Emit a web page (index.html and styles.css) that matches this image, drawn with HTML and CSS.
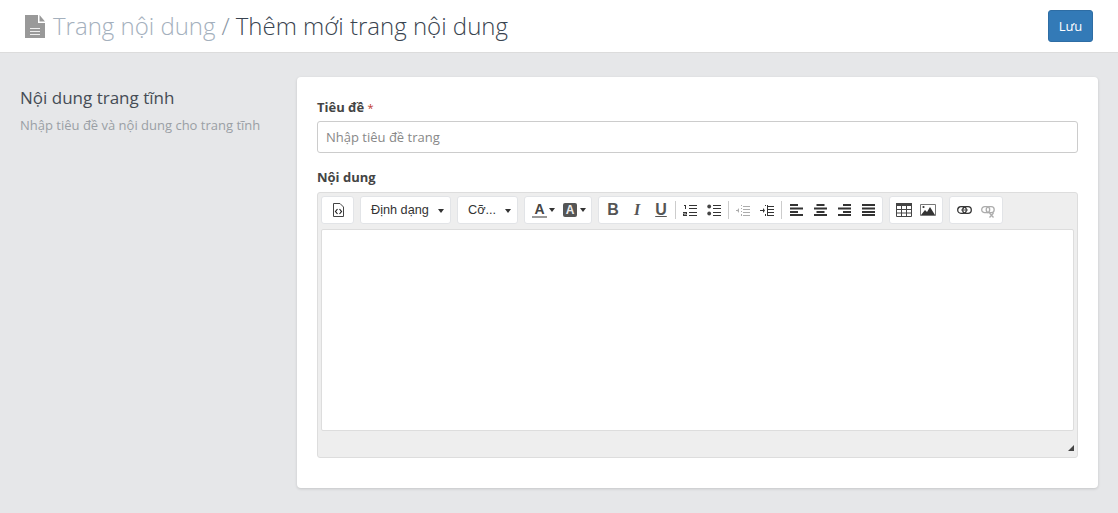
FILE: index.html
```html
<!DOCTYPE html>
<html lang="vi">
<head>
    <meta charset="UTF-8">
    <title>Thêm mới trang nội dung</title>
    <link rel="stylesheet" href="styles.css">
</head>
<body>
    <header class="page-header">
        <h1 class="page-title">
            <svg class="title-icon" width="20" height="23" viewBox="0 0 20 23">
                <path fill="#999" d="M0 0h13v8h7v15H0z"/>
                <path fill="#999" d="M14.500 0l5.500 6.500h-5.500z"/>
                <path fill="#eee" d="M5 13h10v1H5zM5 16h10v1H5zM5 19h10v1H5z"/>
            </svg>
            <span class="crumb">Trang nội dung</span>
            <span class="crumb-sep">/</span>
            <span>Thêm mới trang nội dung</span>
        </h1>
        <button class="btn-save" type="button">Lưu</button>
    </header>

    <main class="page-body">
        <aside class="intro">
            <h2>Nội dung trang tĩnh</h2>
            <p>Nhập tiêu đề và nội dung cho trang tĩnh</p>
        </aside>

        <section class="card">
            <label class="field-label" for="title">Tiêu đề <span class="required">*</span></label>
            <input class="text-input" id="title" type="text" placeholder="Nhập tiêu đề trang">

            <label class="field-label label-content">Nội dung</label>
            <div class="editor">
                <div class="toolbar">
                    <div class="tool-group group-code">
                        <span class="tool">
                            <svg width="12" height="14" viewBox="0 0 12 14"><path fill="none" stroke="#444" d="M1.500.5h6.500l3.500 3.500v9.500h-10z"/><path fill="none" stroke="#222" stroke-width="1.200" d="M5.500 6L3.500 8.500l2 2.500M7.500 6l2 2.500-2 2.500"/></svg>
                        </span>
                    </div>
                    <div class="tool-group select select-format">Định dạng<i class="caret"></i></div>
                    <div class="tool-group select select-size">Cỡ...<i class="caret"></i></div>
                    <div class="tool-group group-color">
                        <span class="tool color-tool tool-fore">
                            <span class="fore-glyph">A</span>
                            <i class="caret small"></i>
                        </span>
                        <span class="tool color-tool tool-back">
                            <span class="back-glyph">A</span>
                            <i class="caret small"></i>
                        </span>
                    </div>
                    <div class="tool-group">
                        <span class="tool"><b class="glyph-b">B</b></span>
                        <span class="tool"><b class="glyph-i">I</b></span>
                        <span class="tool"><b class="glyph-u">U</b></span>
                        <i class="sep"></i>
                        <span class="tool">
                            <svg width="14" height="14" viewBox="0 0 14 14"><path fill="#333" d="M1 2h2v4H2V3H1zM0 9h4v2.500H1V12h3v1H0v-2.500h3V10H0zM6 2h8v1H6zM6 5h8v1H6zM6 9h8v1H6zM6 12h8v1H6z"/></svg>
                        </span>
                        <span class="tool">
                            <svg width="14" height="14" viewBox="0 0 14 14"><circle cx="2.200" cy="3.500" r="1.900" fill="#444"/><circle cx="2.200" cy="10.500" r="1.900" fill="#444"/><path fill="#333" d="M6 2h8v1H6zM6 5h8v1H6zM6 9h8v1H6zM6 12h8v1H6z"/></svg>
                        </span>
                        <i class="sep"></i>
                        <span class="tool dim">
                            <svg width="14" height="14" viewBox="0 0 14 14"><path fill="#333" d="M7 3h7v1H7zM7 6h7v1H7zM7 9h7v1H7zM7 12h7v1H7zM5 2h1v1H5zM5 5h1v1H5zM5 8h1v1H5zM5 11h1v2H5zM0 7h3v1H0zM3 5v5L1 7.500z"/></svg>
                        </span>
                        <span class="tool">
                            <svg width="14" height="14" viewBox="0 0 14 14"><path fill="#333" d="M7 2h1v11H7zM8 3h6v1H8zM8 6h6v1H8zM8 9h6v1H8zM8 12h6v1H8zM5 2h1v1H5zM5 11h1v2H5zM0 7h3v1H0zM3 5v5l2-2.500z"/></svg>
                        </span>
                        <i class="sep"></i>
                        <span class="tool"><svg width="13" height="12" viewBox="0 0 13 12"><path fill="#333" d="M0 0h8v2H0zM0 3.500h13v2H0zM0 7h8v2H0zM0 10h13v2H0z"/></svg></span>
                        <span class="tool"><svg width="13" height="12" viewBox="0 0 13 12"><path fill="#333" d="M2.500 0h8v2h-8zM0 3.500h13v2H0zM2.500 7h8v2h-8zM0 10h13v2H0z"/></svg></span>
                        <span class="tool"><svg width="13" height="12" viewBox="0 0 13 12"><path fill="#333" d="M5 0h8v2H5zM0 3.500h13v2H0zM5 7h8v2H5zM0 10h13v2H0z"/></svg></span>
                        <span class="tool"><svg width="13" height="12" viewBox="0 0 13 12"><path fill="#333" d="M0 0h13v2H0zM0 3.500h13v2H0zM0 7h13v2H0zM0 10h13v2H0z"/></svg></span>
                    </div>
                    <div class="tool-group">
                        <span class="tool"><svg width="16" height="14" viewBox="0 0 16 14"><path fill="#444" d="M0 0h16v3H0z"/><path fill="none" stroke="#444" d="M.5 3v10.500h15V3M5.500 3v10.500M10.500 3v10.500M.5 6.500h15M.5 10h15"/></svg></span>
                        <span class="tool"><svg width="16" height="12" viewBox="0 0 16 12"><path fill="none" stroke="#777" d="M.5.500h15v11H.5z"/><path fill="#333" d="M1 11l4-5 2 2 3-5 5 8z"/><circle cx="3.500" cy="3" r="1.100" fill="#333"/></svg></span>
                    </div>
                    <div class="tool-group">
                        <span class="tool"><svg width="15" height="8" viewBox="0 0 15 8"><g fill="none" stroke="#333" stroke-width="1.300"><rect x=".7" y=".7" width="8.600" height="6.600" rx="3.300"/><rect x="5.700" y=".7" width="8.600" height="6.600" rx="3.300"/></g><path fill="#555" d="M4 3.500h7v1H4z"/></svg></span>
                        <span class="tool dim"><svg width="15" height="12" viewBox="0 0 15 12" class="unlink-icon"><g fill="none" stroke="#333" stroke-width="1.300"><rect x=".7" y=".7" width="8" height="6" rx="3"/><rect x="5.200" y=".7" width="8" height="6" rx="3"/><path d="M8.500 7l4 4.500M12.500 7l-4 4.500"/></g></svg></span>
                    </div>
                </div>
                <div class="edit-area"></div>
                <div class="statusbar"><i class="resize-handle"></i></div>
            </div>
        </section>
    </main>
</body>
</html>
```

FILE: styles.css
```css
* {
    box-sizing: border-box;
}
body {
    margin: 0;
    background-color: #e6e7e9;
    color: #333;
    font-family: "Open Sans", sans-serif;
    font-size: 13px;
}
.page-header {
    display: flex;
    justify-content: space-between;
    align-items: center;
    height: 53px;
    padding: 0 25px;
    background-color: #fff;
    border-bottom: 1px solid #dcdcdc;
}
.page-title {
    display: flex;
    align-items: center;
    gap: 6px;
    margin: 0 0 2px;
    font-size: 24px;
    font-weight: 300;
    color: #3a4450;
    white-space: nowrap;
}
.title-icon {
    margin: 2px 2px 0 0;
}
.crumb {
    color: #a4b0bd;
}
.crumb-sep {
    color: #8a96a3;
}
.btn-save {
    width: 45px;
    height: 32px;
    padding: 0;
    font-family: inherit;
    font-size: 13px;
    color: #fff;
    background-color: #337ab7;
    border: 1px solid #2e6da4;
    border-radius: 3px;
}
.page-body {
    display: flex;
    align-items: flex-start;
    padding: 24px 20px 25px;
}
.intro {
    width: 277px;
    flex-shrink: 0;
    padding-top: 9px;
}
.intro h2 {
    margin: 0 0 6px;
    font-size: 17px;
    font-weight: 400;
    line-height: 24px;
    color: #454c55;
}
.intro p {
    margin: 0;
    font-size: 13px;
    line-height: 18px;
    color: #9a9fa5;
}
.card {
    flex: 1;
    height: 411px;
    padding: 21px 20px;
    background-color: #fff;
    border-radius: 4px;
    box-shadow: 0 1px 3px rgba(0, 0, 0, 0.15);
}
.field-label {
    display: block;
    height: 18px;
    margin-bottom: 5px;
    font-size: 13px;
    font-weight: 700;
    line-height: 18px;
    color: #444;
}
.required {
    font-size: 11px;
    font-weight: 400;
    line-height: 1;
    color: #c0392b;
}
.text-input {
    display: block;
    width: 100%;
    height: 32px;
    padding: 0 8px;
    font-family: inherit;
    font-size: 13px;
    border: 1px solid #ccc;
    border-radius: 3px;
}
.text-input::placeholder {
    color: #888;
}
.label-content {
    margin-top: 15px;
    margin-bottom: 6px;
}
.editor {
    height: 266px;
    display: flex;
    flex-direction: column;
    background-color: #eee;
    border: 1px solid #ddd;
    border-radius: 3px;
}
.toolbar {
    display: flex;
    gap: 6px;
    padding: 3px 3px 0;
    height: 36px;
}
.tool-group {
    display: flex;
    align-items: center;
    height: 28px;
    padding: 0 2px;
    background-color: #fff;
    border: 1px solid #e2e4e7;
    border-radius: 3px;
}
.group-code {
    width: 33px;
    justify-content: center;
}
.tool {
    display: flex;
    justify-content: center;
    align-items: center;
    width: 24px;
    height: 24px;
}
.dim {
    opacity: 0.4;
}
.unlink-icon {
    margin-top: 3px;
}
.sep {
    width: 1px;
    height: 18px;
    margin: 0 2px;
    background-color: #ccc;
}
.select {
    position: relative;
    padding: 0 0 0 10px;
    font-family: "Liberation Sans", sans-serif;
    font-size: 12.7px;
    color: #333;
}
.select-format {
    width: 91px;
}
.select-size {
    width: 61px;
}
.caret {
    position: absolute;
    right: 6px;
    top: 12px;
    border-top: 4px solid #333;
    border-left: 3px solid transparent;
    border-right: 3px solid transparent;
}
.group-color {
    width: 68px;
    padding: 0 0 0 7px;
}
.color-tool {
    position: relative;
    justify-content: flex-start;
}
.tool-fore {
    width: 31px;
}
.tool-back {
    width: 26px;
}
.caret.small {
    top: 10px;
    left: 17px;
    right: auto;
}
.fore-glyph {
    width: 15px;
    height: 15px;
    font-family: "Liberation Sans", sans-serif;
    font-size: 14px;
    font-weight: 700;
    line-height: 13px;
    text-align: center;
    color: #444;
    border-bottom: 2px solid #999;
}
.back-glyph {
    width: 14px;
    height: 14px;
    font-family: "Liberation Sans", sans-serif;
    font-size: 12px;
    font-weight: 700;
    line-height: 14px;
    text-align: center;
    color: #eee;
    background-color: #555;
    border-radius: 2px;
}
.glyph-b,
.glyph-i,
.glyph-u {
    font-family: "Liberation Sans", sans-serif;
    font-size: 16px;
    font-weight: 700;
    color: #555;
}
.glyph-i {
    font-family: "Liberation Serif", serif;
    font-style: italic;
}
.glyph-u {
    text-decoration: underline;
}
.edit-area {
    height: 202px;
    margin: 0 3px;
    background-color: #fff;
    border: 1px solid #ddd;
    border-radius: 2px;
}
.statusbar {
    position: relative;
    flex: 1;
}
.resize-handle {
    position: absolute;
    right: 3px;
    bottom: 6px;
    border-bottom: 6px solid #444;
    border-left: 6px solid transparent;
}
```
